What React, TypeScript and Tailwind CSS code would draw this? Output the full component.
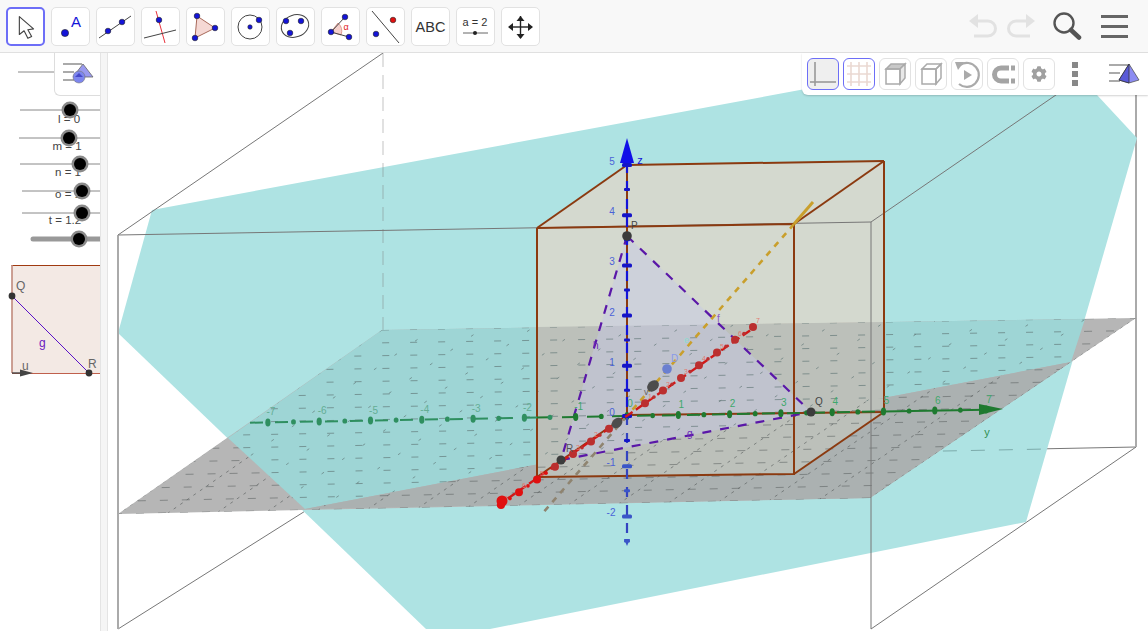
import { FaCog } from "react-icons/fa";

const BLUE = "#1414d8";

function Dot({ x, y, r = 2.8, fill = BLUE }: { x: number; y: number; r?: number; fill?: string }) {
  return <circle cx={x} cy={y} r={r} fill={fill} stroke="#222" strokeWidth="0.6" />;
}

// toolbar icons, all drawn in the coordinates of the 39px tool button
const toolIcons = [
  <path key="move" d="M13 9 L13 28 L18 24 L22 32 L26 30 L22 23 L28 22 Z" fill="#fff" stroke="#444" strokeWidth="1.2" strokeLinejoin="round" />,
  <g key="point">
    <Dot x={14} y={26} r={3.6} />
    <text x={25} y={20} fontSize="15" fill={BLUE} textAnchor="middle">A</text>
  </g>,
  <g key="line">
    <line x1="3" y1="31" x2="35" y2="9" stroke="#444" />
    <Dot x={12} y={24} />
    <Dot x={26} y={15} />
  </g>,
  <g key="perp">
    <line x1="15" y1="4" x2="24" y2="36" stroke="#e8323c" />
    <line x1="3" y1="31" x2="35" y2="23" stroke="#444" />
    <Dot x={18} y={13} />
  </g>,
  <g key="poly">
    <polygon points="11,9 29,21 9,31" fill="#f5d8d4" stroke="#a8695a" strokeWidth="1" />
    <Dot x={11} y={9} />
    <Dot x={29} y={21} />
    <Dot x={9} y={31} />
  </g>,
  <g key="circle">
    <circle cx="19" cy="20" r="12" fill="none" stroke="#444" />
    <Dot x={19} y={20} r={2.2} />
    <Dot x={28} y={13} />
  </g>,
  <g key="conic">
    <ellipse cx="19" cy="19" rx="14" ry="11" fill="none" stroke="#444" transform="rotate(-20 19 19)" />
    <Dot x={10} y={14} />
    <Dot x={25} y={14} />
    <Dot x={14} y={26} />
  </g>,
  <g key="angle">
    <path d="M10 25 L17 16 A11 11 0 0 1 20 28 Z" fill="#f5d0cc" stroke="#d98a80" strokeWidth="0.8" />
    <line x1="10" y1="25" x2="24" y2="10" stroke="#444" />
    <line x1="10" y1="25" x2="28" y2="30" stroke="#444" />
    <Dot x={10} y={25} />
    <Dot x={24} y={10} />
    <Dot x={28} y={30} />
    <text x={25} y={23} fontSize="9" fill="#e02020" textAnchor="middle">α</text>
  </g>,
  <g key="reflect">
    <line x1="6" y1="4" x2="33" y2="36" stroke="#444" />
    <Dot x={10} y={27} />
    <Dot x={27} y={13} fill="#e01010" />
  </g>,
  <text key="abc" x="19.5" y="25" fontSize="14.5" fill="#333" textAnchor="middle">ABC</text>,
  <g key="slider">
    <text x="19" y="19" fontSize="11" fill="#333" textAnchor="middle">a = 2</text>
    <line x1="7" y1="26" x2="32" y2="26" stroke="#666" />
    <circle cx="19" cy="26" r="2" fill="#222" />
  </g>,
  <g key="pan" fill="#222">
    <line x1="8" y1="20" x2="31" y2="20" stroke="#222" strokeWidth="1.4" />
    <line x1="19.5" y1="9" x2="19.5" y2="31" stroke="#222" strokeWidth="1.4" />
    <polygon points="19.5,9 15.5,14 23.5,14" />
    <polygon points="19.5,32 15.5,27 23.5,27" />
    <polygon points="7,20 12,16 12,24" />
    <polygon points="32,20 27,16 27,24" />
  </g>,
];

function ToolBar() {
  return (
    <div className="flex h-[53px] shrink-0 items-center border-b border-[#e0e0e0] bg-[#f8f8f8] pl-[6px]">
      <div className="flex gap-[6px]">
        {toolIcons.map((icon, i) => (
          <div
            key={i}
            className={
              i === 0
                ? "h-[39px] w-[39px] rounded-[5px] border-2 border-[#6d6ef7] bg-white"
                : "h-[39px] w-[39px] rounded-[5px] border border-[#e2e2e2] bg-white"
            }
          >
            <svg viewBox="1 1 37 37" className="h-full w-full">
              {icon}
            </svg>
          </div>
        ))}
      </div>
      <div className="ml-auto flex items-center gap-[8px] pr-[20px]">
        <svg viewBox="0 0 30 26" className="h-[26px] w-[30px]" fill="none" stroke="#e2e2e2" strokeWidth="3">
          <path d="M5 8 H20 A7.5 7.5 0 0 1 20 23 H6" />
          <polygon points="1,8 10,1 10,15" fill="#e2e2e2" stroke="none" />
        </svg>
        <svg viewBox="0 0 30 26" className="h-[26px] w-[30px]" fill="none" stroke="#e2e2e2" strokeWidth="3">
          <path d="M25 8 H10 A7.5 7.5 0 0 0 10 23 H24" />
          <polygon points="29,8 20,1 20,15" fill="#e2e2e2" stroke="none" />
        </svg>
        <svg viewBox="0 0 30 30" className="ml-[8px] h-[30px] w-[30px]" fill="none">
          <circle cx="12" cy="12" r="9.5" stroke="#555" strokeWidth="2.4" />
          <line x1="19" y1="19" x2="27" y2="26.5" stroke="#555" strokeWidth="4.5" strokeLinecap="round" />
        </svg>
        <div className="ml-[11px] flex w-[27px] flex-col gap-[7px]">
          <div className="h-[3px] bg-[#666]" />
          <div className="h-[3px] bg-[#666]" />
          <div className="h-[3px] bg-[#666]" />
        </div>
      </div>
    </div>
  );
}

function PanelIcon({ circle }: { circle?: boolean }) {
  return (
    <svg viewBox="0 0 32 24" className="h-[24px] w-[32px]">
      <line x1="1" y1="2" x2="20" y2="2" stroke="#aaa" strokeWidth="2" />
      <line x1="1" y1="10" x2="12" y2="10" stroke="#aaa" strokeWidth="2" />
      <line x1="1" y1="18" x2="12" y2="18" stroke="#aaa" strokeWidth="2" />
      {circle ? (
        <g>
          <polygon points="21,2 31,15 11,15" fill="#9a9af0" stroke="#666" strokeWidth="0.8" />
          <circle cx="17" cy="15" r="6" fill="#7d86ee" stroke="#777" strokeWidth="0.6" />
          <polygon points="17,11 21,15 13,15" fill="#4648c8" />
        </g>
      ) : (
        <g>
          <polygon points="21,1 31,17 21,20 11,17" fill="#8c8cf2" stroke="#555" strokeWidth="0.8" />
          <polygon points="21,1 11,17 21,20" fill="#5a5ad8" stroke="#333" strokeWidth="0.8" />
        </g>
      )}
    </svg>
  );
}

// left side of the picture, a small 2D view with the sliders and the square
function SideView() {
  const sliders = [
    { y: 110, from: 20, knob: 70, label: "l = 0", lx: 69, ly: 123 },
    { y: 138, from: 19, knob: 69, label: "m = 1", lx: 67, ly: 150 },
    { y: 164, from: 20, knob: 80, label: "n = 1", lx: 68, ly: 176 },
    { y: 191, from: 22, knob: 82, label: "o = 1", lx: 68, ly: 198 },
    { y: 213, from: 22, knob: 82, label: "t = 1.2", lx: 65, ly: 224 },
  ];
  return (
    <svg viewBox="0 53 100 578" className="h-full w-[100px] shrink-0 bg-white">
      <line x1="18" y1="72" x2="60" y2="72" stroke="#888" />
      {sliders.map((s) => (
        <g key={s.y}>
          <line x1={s.from} y1={s.y} x2="100" y2={s.y} stroke="#888" />
          <text x={s.lx} y={s.ly} fontSize="11.5" fill="#444" textAnchor="middle">{s.label}</text>
          <circle cx={s.knob} cy={s.y} r="8.5" fill="#8a8a8a" />
          <circle cx={s.knob} cy={s.y} r="6" fill="#000" />
        </g>
      ))}
      <line x1="33" y1="239" x2="100" y2="239" stroke="#999" strokeWidth="5" strokeLinecap="round" />
      <circle cx="79" cy="239" r="8.5" fill="#8a8a8a" />
      <circle cx="79" cy="239" r="6" fill="#000" />

      <rect x="12" y="265" width="88" height="108" fill="#f3e9e4" />
      <line x1="11.5" y1="265.5" x2="100" y2="265.5" stroke="#a03a10" />
      <line x1="12" y1="265" x2="12" y2="373" stroke="#c08a7c" strokeWidth="1.6" />
      <line x1="12" y1="373.5" x2="100" y2="373.5" stroke="#c0604c" />
      <line x1="12" y1="296" x2="89" y2="373" stroke="#5a10c8" />
      <line x1="12" y1="373" x2="24" y2="373" stroke="#444" strokeWidth="1.4" />
      <polygon points="20,369.5 33,373 20,376.5" fill="#444" />
      <circle cx="12" cy="296" r="3.4" fill="#333" />
      <circle cx="89" cy="373" r="3.4" fill="#333" />
      <text x="16" y="290" fontSize="12" fill="#666">Q</text>
      <text x="88" y="368" fontSize="12" fill="#666">R</text>
      <text x="39" y="347" fontSize="12" fill="#6a18c0">g</text>
      <text x="22" y="370" fontSize="12" fill="#666">u</text>
    </svg>
  );
}

const lerp = (a: number, b: number, t: number) => a + (b - a) * t;

// z=0 grid, interpolated between the corners of the gray plane
const gridRows = Array.from({ length: 15 }, (_, i) => {
  const t = i / 14;
  return {
    x1: lerp(382, 118, t), y1: lerp(330, 514, t),
    x2: lerp(1136, 870, t), y2: lerp(318, 498, t),
  };
});
const gridCols = Array.from({ length: 16 }, (_, i) => {
  const t = i / 15;
  return {
    x1: lerp(382, 1136, t), y1: lerp(330, 318, t),
    x2: lerp(118, 870, t), y2: lerp(514, 498, t),
  };
});

const yAt = (x: number) => 416 - 0.0178 * (x - 627);
const yUnits = [-7, -6, -5, -4, -3, -2, -1, 0, 1, 2, 3, 4, 5, 6, 7];
const xUnits = [-7, -6, -5, -4, -3, -2, -1, 1, 2, 3, 4, 5, 6, 7];
const zUnits = [5, 4, 3, 2, 1, 0, -1, -2];

function Scene() {
  return (
    <svg viewBox="108 53 1040 578" className="h-full min-w-0 flex-1 bg-white">
      <defs>
        <clipPath id="plane-above">
          <polygon points="228,438 382,330 1085,319 1071,362 305,509" />
        </clipPath>
        <clipPath id="plane-below">
          <polygon points="118,514 228,438 305,509 1071,362 1085,319 1136,318 870,498" />
        </clipPath>
      </defs>

      {/* bounding box, back lines stay behind the teal plane */}
      <g stroke="#777" fill="none">
        <line x1="118" y1="629" x2="383" y2="462" />
        <line x1="871" y1="629" x2="1136" y2="447" />
        <line x1="383" y1="462" x2="1136" y2="447" />
        <line x1="1136" y1="53" x2="1136" y2="447" stroke="#aaa" strokeWidth="2" />
      </g>

      {/* teal plane */}
      <polygon points="152,210 1000,53 1058,53 1137,138 1026,522 490,629 426,629 118,333" fill="#aee3e3" />
      <line x1="383" y1="53" x2="383" y2="462" stroke="#777" strokeDasharray="14 8" strokeOpacity="0.45" />
      <line x1="383" y1="462" x2="1047" y2="449" stroke="#6f9c9c" strokeDasharray="14 14" strokeOpacity="0.8" />

      {/* gray plane */}
      <polygon points="118,514 382,330 1136,318 870,498" fill="#b6b6b6" />
      <polygon points="228,438 382,330 1085,319 1071,362 305,509" fill="#9ed5d5" />
      <polygon points="305,509 1071,362 870,498" fill="#abb1b1" />

      {/* cube */}
      <polygon points="537,228 627,165 884,161 884,412 794,474 537,477" fill="#f4d2c0" fillOpacity="0.55" />
      <polygon points="537,327 884,322 884,412 794,474 537,477" fill="#bcc0ba" />

      {/* triangle PQR */}
      <polygon points="627,236 811,412 561,460" fill="#c6c8e6" fillOpacity="0.45" />

      {/* grid, sparse where the teal plane is on top, denser on the gray */}
      <g clipPath="url(#plane-above)" stroke="#5f7474" strokeOpacity="0.65">
        {gridRows.map((l, i) => (
          <line key={i} {...l} strokeDasharray="7 21" strokeDashoffset={i * 9} />
        ))}
        {gridCols.map((l, i) => (
          <line key={i} {...l} strokeDasharray="3 22" strokeDashoffset={i * 7} />
        ))}
      </g>
      <g clipPath="url(#plane-below)" stroke="#5a5f5f">
        {gridRows.map((l, i) => (
          <line key={i} {...l} strokeOpacity="0.55" strokeDasharray="8 14" strokeDashoffset={i * 5} />
        ))}
        {gridCols.map((l, i) => (
          <line key={i} {...l} strokeOpacity="0.65" strokeDasharray="3 5" />
        ))}
      </g>

      {/* front lines of the bounding box */}
      <g stroke="#777">
        <line x1="118" y1="235" x2="871" y2="222" />
        <line x1="118" y1="235" x2="118" y2="629" stroke="#aaa" strokeWidth="2" />
        <line x1="118" y1="235" x2="383" y2="53" />
        <line x1="871" y1="222" x2="871" y2="629" />
        <line x1="871" y1="222" x2="1136" y2="40" />
      </g>

      {/* edges of the cube */}
      <g stroke="#8b3a10" strokeWidth="2" fill="none">
        <polyline points="537,228 794,224 794,474 537,477 537,228" />
        <line x1="537" y1="228" x2="627" y2="165" />
        <line x1="794" y1="224" x2="884" y2="161" />
        <line x1="794" y1="474" x2="884" y2="412" />
        <line x1="627" y1="165" x2="884" y2="161" />
        <line x1="884" y1="161" x2="884" y2="412" />
        <line x1="627" y1="165" x2="627" y2="415" />
        <line x1="627" y1="415" x2="884" y2="412" />
        <line x1="537" y1="477" x2="627" y2="415" />
      </g>

      {/* orange line */}
      <line x1="813" y1="202" x2="794" y2="224" stroke="#c99f2c" strokeWidth="3" />
      <line x1="794" y1="224" x2="627" y2="416" stroke="#c99f2c" strokeWidth="2.6" strokeDasharray="6 6" />
      <line x1="627" y1="416" x2="542" y2="514" stroke="#8f8470" strokeWidth="2.6" strokeDasharray="6 6" />

      {/* purple segments */}
      <g stroke="#5a17a8" strokeWidth="2.2" strokeDasharray="9 9">
        <line x1="627" y1="236" x2="561" y2="460" />
        <line x1="627" y1="236" x2="811" y2="412" />
        <line x1="561" y1="460" x2="811" y2="412" />
      </g>

      {/* y axis */}
      <line x1="250" y1={yAt(250)} x2="537" y2={yAt(537)} stroke="#2f8f60" strokeWidth="2" strokeDasharray="13 12" />
      <line x1="537" y1={yAt(537)} x2="884" y2={yAt(884)} stroke="#1f7a30" strokeWidth="2" strokeDasharray="13 12" />
      <line x1="884" y1={yAt(884)} x2="985" y2={yAt(985)} stroke="#1f7a30" strokeWidth="2" />
      <polygon points="979,404 1003,409 979,415" fill="#1f7a30" />
      {yUnits.map((u) => {
        const x = 627 + u * 51.3;
        const under = x < 537;
        return (
          <g key={u}>
            <ellipse cx={x} cy={yAt(x)} rx="2.6" ry="4" fill={under ? "#2f8f60" : "#1f7a30"} />
            {u !== 7 && (
              <ellipse cx={x + 25.6} cy={yAt(x + 25.6)} rx="2.4" ry="2.6" fill={under ? "#2f8f60" : "#1f7a30"} />
            )}
            {u !== 0 && (
              <text x={x + 3} y={yAt(x) - 7} fontSize="10" fill={under ? "#63ad94" : "#3fa86c"} textAnchor="middle">{u}</text>
            )}
          </g>
        );
      })}
      <text x="630" y="407" fontSize="10" fill="#3fa86c" textAnchor="middle">0</text>
      <text x="987" y="436" fontSize="11" fill="#2f9050" textAnchor="middle">y</text>

      {/* z axis */}
      <line x1="627" y1="163" x2="627" y2="415" stroke="#1414d8" strokeWidth="2.2" strokeDasharray="10 8" />
      <line x1="627" y1="415" x2="627" y2="540" stroke="#3344c0" strokeWidth="2.2" strokeDasharray="10 8" />
      <polygon points="627,138 620,163 634,163" fill="#1010e8" />
      <polygon points="627,546 624,539 630,539" fill="#3a55c8" />
      {zUnits.map((u) => {
        const y = 416 - u * 50.2;
        return (
          <g key={u}>
            <rect x="622" y={y - 2} width="10" height="4" rx="1.5" fill={u < 0 ? "#3a55c8" : "#1414c8"} />
            <rect x="624" y={y + 23} width="6" height="3" rx="1" fill={u < 0 ? "#3a55c8" : "#1414c8"} />
            <text x={u < 0 ? 611 : 612} y={y} fontSize="10" fill="#4a62d8" textAnchor="middle">{u}</text>
          </g>
        );
      })}
      <text x="640" y="164" fontSize="11" fill="#1414d8" textAnchor="middle">z</text>

      {/* x axis */}
      <line x1="497" y1="506" x2="755" y2="327" stroke="#d01818" strokeWidth="2.4" strokeDasharray="9 4" />
      {xUnits.map((u) => {
        const x = 627 + u * 18;
        const y = 416 - u * 12.7;
        return (
          <g key={u}>
            <circle cx={x} cy={y} r="4" fill={u < -4 ? "#e01010" : "#bb2f2f"} />
            {u !== 7 && (
              <circle cx={x + 9} cy={y - 6.3} r="1.8" fill={u < -4 ? "#e01010" : "#bb2f2f"} />
            )}
            <text x={x + 5} y={y - 4} fontSize="7" fill="#e27a70" textAnchor="middle">{Math.abs(u)}</text>
          </g>
        );
      })}
      <circle cx="502" cy="501" r="5.5" fill="#e01010" />

      {/* points */}
      <circle cx="627" cy="236" r="4.8" fill="#3c3c3c" />
      <circle cx="811" cy="412" r="4.5" fill="#3c3c3c" />
      <circle cx="561" cy="460" r="4.5" fill="#3c3c3c" />
      <ellipse cx="653" cy="386" rx="6.5" ry="5" fill="#4c4c4c" transform="rotate(-40 653 386)" />
      <ellipse cx="617" cy="423" rx="6" ry="4.5" fill="#4c4c4c" transform="rotate(-40 617 423)" />
      <circle cx="667" cy="369" r="4.8" fill="#6a7fd0" />
      <text x="631" y="229" fontSize="10" fill="#444">P</text>
      <text x="815" y="405" fontSize="10" fill="#444">Q</text>
      <text x="566" y="452" fontSize="10" fill="#555">R</text>
      <text x="671" y="362" fontSize="10" fill="#8a9ae8">D</text>
      <text x="684" y="343" fontSize="9" fill="#8adcd0">e</text>
      <text x="593" y="349" fontSize="10" fill="#6a28b8">h</text>
      <text x="687" y="437" fontSize="10" fill="#6a28b8">g</text>
      <text x="717" y="322" fontSize="10" fill="#8a58c8">f</text>
      <text x="644" y="395" fontSize="9" fill="#666">v</text>
    </svg>
  );
}

function StyleBar() {
  return (
    <div className="absolute right-0 top-[53px] flex h-[42px] w-[346px] items-start rounded-bl-md bg-white pl-[5px] pt-[5px] shadow-[0_1px_2px_rgba(0,0,0,0.18)]">
      <div className="flex gap-[4px]">
        <div className="h-[32px] w-[32px] rounded-[6px] border border-[#6d6ef7] bg-[#efefef]">
          <svg viewBox="0 0 30 30" className="h-full w-full" stroke="#999" strokeWidth="1.6">
            <line x1="7" y1="3" x2="7" y2="27" />
            <line x1="2" y1="23" x2="28" y2="23" />
          </svg>
        </div>
        <div className="h-[32px] w-[32px] rounded-[6px] border border-[#6d6ef7] bg-white">
          <svg viewBox="0 0 30 30" className="h-full w-full" stroke="#ead9d2" strokeWidth="1.6">
            <path d="M7 3V27M15 3V27M23 3V27M3 7H27M3 15H27M3 23H27" />
          </svg>
        </div>
        <div className="h-[32px] w-[32px] rounded-[6px] border border-[#e2e2e2] bg-white">
          <svg viewBox="0 0 30 30" className="h-full w-full" fill="none" stroke="#aaa" strokeWidth="1.5">
            <polygon points="6,10 11,5 25,5 20,10" fill="#c8c8c8" />
            <polygon points="20,10 25,5 25,19 20,25" fill="#e8e8e8" />
            <rect x="6" y="10" width="14" height="15" />
          </svg>
        </div>
        <div className="h-[32px] w-[32px] rounded-[6px] border border-[#e2e2e2] bg-white">
          <svg viewBox="0 0 30 30" className="h-full w-full" fill="none" stroke="#aaa" strokeWidth="1.5">
            <polygon points="6,10 11,5 25,5 20,10" />
            <polygon points="20,10 25,5 25,19 20,25" />
            <rect x="6" y="10" width="14" height="15" />
          </svg>
        </div>
        <div className="h-[32px] w-[32px] rounded-[6px] border border-[#e2e2e2] bg-white">
          <svg viewBox="0 0 30 30" className="h-full w-full" fill="none" stroke="#aaa" strokeWidth="2.2">
            <path d="M8 6 A12 12 0 1 1 7 25" />
            <polygon points="3,3 12,3 6,11" fill="#aaa" stroke="none" />
            <polygon points="12,11 20,16 12,21" fill="#aaa" stroke="none" />
          </svg>
        </div>
        <div className="h-[32px] w-[32px] rounded-[6px] border border-[#e2e2e2] bg-white">
          <svg viewBox="0 0 30 30" className="h-full w-full" fill="none" stroke="#a4a4a4" strokeWidth="5">
            <path d="M21 9 H13 A6.5 6.5 0 0 0 13 22 H21" />
            <rect x="23" y="6.5" width="4" height="5" fill="#a4a4a4" stroke="none" />
            <rect x="23" y="19.5" width="4" height="5" fill="#a4a4a4" stroke="none" />
          </svg>
        </div>
        <div className="flex h-[32px] w-[32px] items-center justify-center rounded-[6px] border border-[#e2e2e2] bg-white">
          <FaCog className="h-[16px] w-[16px] text-[#a0a0a0]" />
        </div>
      </div>
      <div className="ml-[17px] mt-[4px] flex flex-col gap-[3px]">
        <div className="h-[6px] w-[6px] bg-[#888]" />
        <div className="h-[6px] w-[6px] bg-[#888]" />
        <div className="h-[6px] w-[6px] bg-[#888]" />
      </div>
      <div className="ml-[30px] mt-[5px]">
        <PanelIcon />
      </div>
    </div>
  );
}

export default function App() {
  return (
    <div className="relative flex h-[631px] w-[1148px] flex-col overflow-hidden bg-white font-['Liberation_Sans',Arial,sans-serif]">
      <ToolBar />
      <div className="flex min-h-0 flex-1">
        <SideView />
        <div className="h-full w-[8px] shrink-0 border-l border-r border-[#e4e4e4] bg-[#f5f5f5]" />
        <Scene />
      </div>
      <div className="absolute left-[54px] top-[53px] flex h-[43px] w-[46px] items-center justify-center rounded-bl-md border-b border-l border-[#ddd] bg-white">
        <PanelIcon circle />
      </div>
      <StyleBar />
    </div>
  );
}
